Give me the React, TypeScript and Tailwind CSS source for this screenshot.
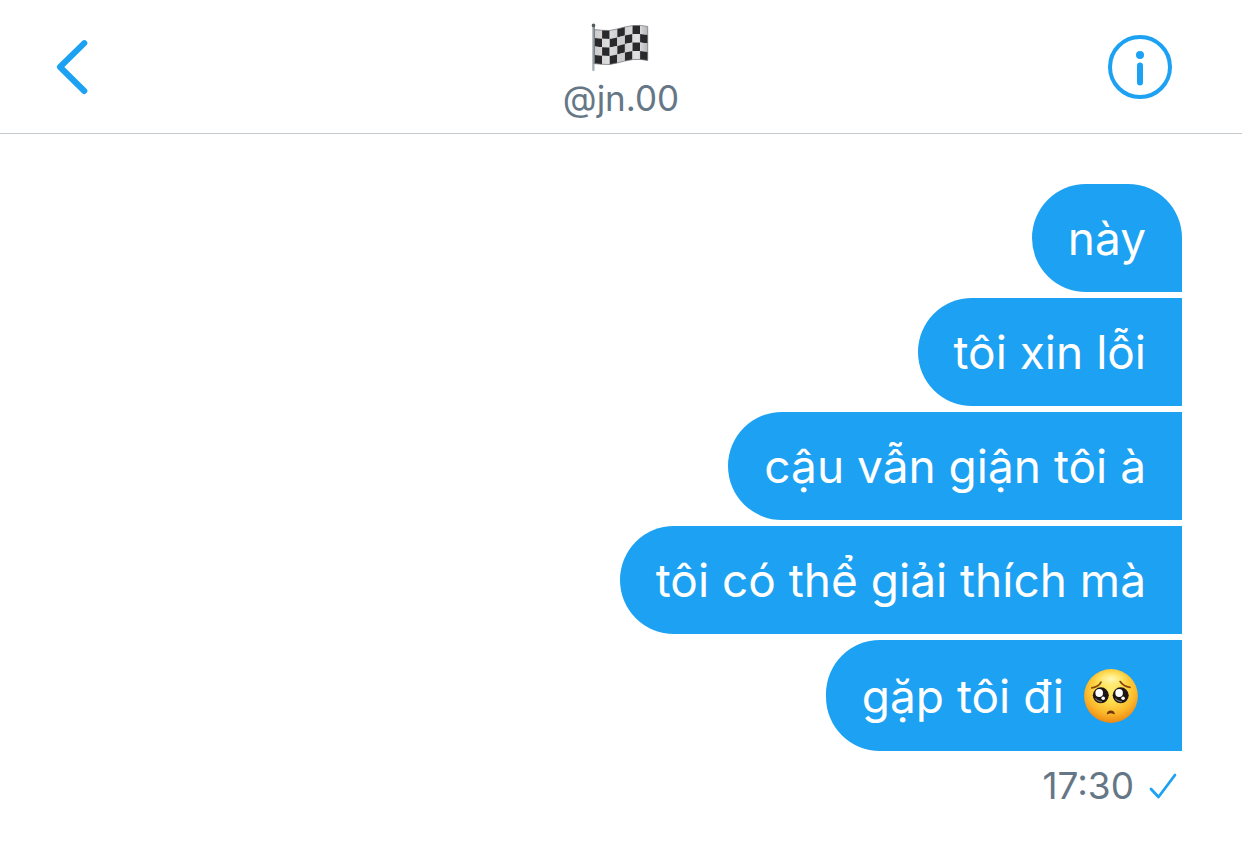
type Message = { text: string; pleading?: boolean };

const messages: Message[] = [
  { text: "này" },
  { text: "tôi xin lỗi" },
  { text: "cậu vẫn giận tôi à" },
  { text: "tôi có thể giải thích mà" },
  { text: "gặp tôi đi", pleading: true },
];

// Top edge of the waving cloth at each column boundary.
const wave = [7.6, 8.3, 8.5, 6.9, 5, 3.6, 3.4, 4.4];
const columnWidth = 7.6;
const rowHeight = 8.5;

function CheckeredFlag() {
  const cells = [];
  for (let col = 0; col < 7; col++) {
    for (let row = 0; row < 4; row++) {
      const x1 = 4.5 + col * columnWidth;
      const x2 = x1 + columnWidth;
      const y1 = wave[col] + row * rowHeight;
      const y2 = wave[col + 1] + row * rowHeight;
      cells.push(
        <polygon
          key={`${col}-${row}`}
          points={`${x1},${y1} ${x2},${y2} ${x2},${y2 + rowHeight} ${x1},${y1 + rowHeight}`}
          fill={(col + row) % 2 ? "#29292b" : "url(#cloth)"}
        />,
      );
    }
  }
  const top = wave.map((y, i) => `${4.5 + i * columnWidth},${y}`);
  const bottom = wave.map((y, i) => `${4.5 + i * columnWidth},${y + 4 * rowHeight}`).reverse();
  return (
    <svg width="62" height="50" viewBox="0 0 62 50" role="img" aria-label="🏁">
      <defs>
        <linearGradient id="cloth" gradientUnits="userSpaceOnUse" x1="5" x2="58" y1="0" y2="0">
          <stop offset="0" stopColor="#cbcbcd" />
          <stop offset="0.25" stopColor="#dededf" />
          <stop offset="0.5" stopColor="#cacacc" />
          <stop offset="0.8" stopColor="#e2e2e3" />
          <stop offset="1" stopColor="#b4b4b7" />
        </linearGradient>
      </defs>
      {cells}
      <polygon points={[...top, ...bottom].join(" ")} fill="none" stroke="#6f6f72" strokeWidth="0.7" />
      <rect x="2.2" y="3" width="2.4" height="46" rx="1" fill="#a9b0b5" />
      <rect x="3.7" y="4" width="1" height="38" fill="#6b7074" />
      <circle cx="3.5" cy="3.4" r="1.8" fill="#55585b" />
    </svg>
  );
}

function PleadingFace() {
  return (
    <svg width="54" height="54" viewBox="0 0 54 54" role="img" aria-label="🥺" className="mr-2 ml-5 shrink-0">
      <defs>
        <radialGradient id="face" cx="0.5" cy="0.36" r="0.66">
          <stop offset="0" stopColor="#ffec70" />
          <stop offset="0.4" stopColor="#ffdc4c" />
          <stop offset="0.7" stopColor="#fbb92b" />
          <stop offset="1" stopColor="#ec8410" />
        </radialGradient>
        <radialGradient id="shine" cx="0.5" cy="0.5" r="0.5">
          <stop offset="0" stopColor="#fffbc4" stopOpacity="0.9" />
          <stop offset="1" stopColor="#fff08a" stopOpacity="0" />
        </radialGradient>
      </defs>
      <circle cx="27" cy="27" r="26.9" fill="url(#face)" />
      <ellipse cx="27" cy="10" rx="17" ry="9" fill="url(#shine)" />
      <path d="M7.8 18.8Q14.5 18.2 17 13.2M36.2 12.6Q39.5 17.8 46 18.4" fill="none" stroke="#8a4a0c" strokeWidth="1.8" strokeLinecap="round" />
      <circle cx="16.8" cy="26.3" r="8" fill="#1d1614" />
      <circle cx="36.7" cy="26.3" r="8" fill="#1d1614" />
      <path d="M11.4 29.5Q14 33 18 32.6M31.3 29.5Q34 33 38 32.6" fill="none" stroke="#76706c" strokeWidth="1.2" />
      <ellipse cx="15.2" cy="24" rx="3.8" ry="4" fill="#fff" />
      <ellipse cx="35.1" cy="24" rx="3.8" ry="4" fill="#fff" />
      <circle cx="19.2" cy="29.3" r="1.8" fill="#fff" />
      <circle cx="39.1" cy="29.3" r="1.8" fill="#fff" />
      <path d="M22.8 44.6Q23.6 41.4 26.8 41.4Q30 41.4 30.8 44.6Q30.8 45.8 29.4 45Q26.8 43.6 24.2 45Q22.8 45.8 22.8 44.6Z" fill="#70370a" />
    </svg>
  );
}

export default function App() {
  return (
    <div className="min-h-screen bg-white font-['Inter','Noto_Sans',sans-serif]">
      <header className="grid grid-cols-[1fr_auto_1fr] items-center border-b border-[#c4c9cd] pt-[22px] pb-[13px]">
        <button type="button" aria-label="Back" className="mb-2 ml-[54px] w-fit justify-self-start">
          <svg width="36" height="60" viewBox="0 0 36 60" fill="none" stroke="#1da1f2" strokeWidth="6" strokeLinecap="round" strokeLinejoin="round">
            <path d="M30.3 6.2L6 30L30.3 54" />
          </svg>
        </button>
        <div className="flex flex-col items-center">
          <CheckeredFlag />
          <h1 className="mt-1 text-[35px]/[44px] font-normal text-[#657786]">@jn.00</h1>
        </div>
        <button type="button" aria-label="Conversation info" className="mr-[70px] mb-2 justify-self-end">
          <svg width="64" height="64" viewBox="0 0 64 64">
            <circle cx="32" cy="32" r="30" fill="none" stroke="#1da1f2" strokeWidth="4" />
            <circle cx="32" cy="20" r="4" fill="#1da1f2" />
            <rect x="29" y="27.5" width="6" height="23" rx="3" fill="#1da1f2" />
          </svg>
        </button>
      </header>
      <main className="flex flex-col items-end pt-[50px] pr-[60px]">
        <ul className="flex flex-col items-end gap-1.5">
          {messages.map((message) => (
            <li
              key={message.text}
              className="flex items-center rounded-l-[54px] bg-[#1da1f2] px-9 py-6 text-[46px]/[60px] text-white first:rounded-tr-[54px] last:pt-[26px] last:pb-[25px]"
            >
              <span>{message.text}</span>
              {message.pleading && <PleadingFace />}
            </li>
          ))}
        </ul>
        <div className="mt-[13px] flex items-center gap-[15px] pr-[5px] text-[37px]/[44px] text-[#657786]">
          <time dateTime="17:30">17:30</time>
          <svg width="28" height="28" viewBox="0 0 28 28" role="img" aria-label="Sent" fill="none" stroke="#1da1f2" strokeWidth="2.8" strokeLinecap="round" strokeLinejoin="round">
            <path d="M2 17L9.5 25L26 3" />
          </svg>
        </div>
      </main>
    </div>
  );
}
